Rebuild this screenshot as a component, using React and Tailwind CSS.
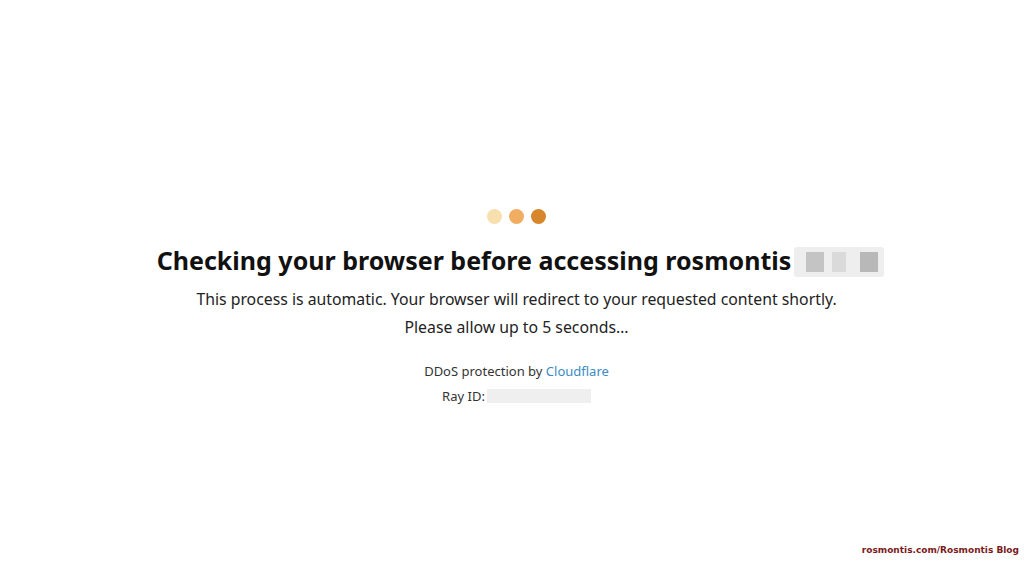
export default function App() {
  return (
    <div className="relative w-[1024px] h-[563px] bg-white overflow-hidden" style={{ fontFamily: '"Noto Sans", sans-serif' }}>
      <div className="flex flex-col items-center pt-[209px] pl-[9px]">
        <div className="flex gap-[7px]">
          <div className="w-[15px] h-[15px] rounded-full bg-[#f8e0ae]" />
          <div className="w-[15px] h-[15px] rounded-full bg-[#f1ad62]" />
          <div className="w-[15px] h-[15px] rounded-full bg-[#d8862c]" />
        </div>
        <div className="mt-[18px] ml-[8px] flex items-center">
          <h1 className="text-[25px] leading-[36px] font-bold text-[#111]">Checking your browser before accessing rosmontis</h1>
          <div className="ml-[3px] mt-[4px] flex items-center h-[30px] w-[90px] bg-[#eeeeee] rounded-[3px]">
            <div className="ml-[12px] w-[18px] h-[20px] bg-[#c4c4c4]" />
            <div className="ml-[8px] w-[14px] h-[20px] bg-[#dadada]" />
            <div className="ml-[14px] w-[18px] h-[20px] bg-[#b8b8b8]" />
          </div>
        </div>
        <p className="mt-[11px] text-[15.8px] leading-[20px] text-[#222]">This process is automatic. Your browser will redirect to your requested content shortly.</p>
        <p className="mt-[8px] text-[15.8px] leading-[20px] text-[#222]">Please allow up to 5 seconds…</p>
        <p className="mt-[25px] text-[13px] leading-[18px] text-[#333]">DDoS protection by <span className="text-[#3b8cc4]">Cloudflare</span></p>
        <div className="mt-[7px] flex items-center text-[13px] leading-[18px] text-[#333]">
          <span>Ray ID:</span>
          <div className="ml-[2px] w-[104px] h-[14px] bg-[#efefef]" />
        </div>
      </div>
      <div className="absolute right-[5px] bottom-[6px] text-[9px] font-bold text-[#7a1b1b]" style={{ fontFamily: '"DejaVu Sans", sans-serif' }}>rosmontis.com/Rosmontis Blog</div>
    </div>
  );
}
